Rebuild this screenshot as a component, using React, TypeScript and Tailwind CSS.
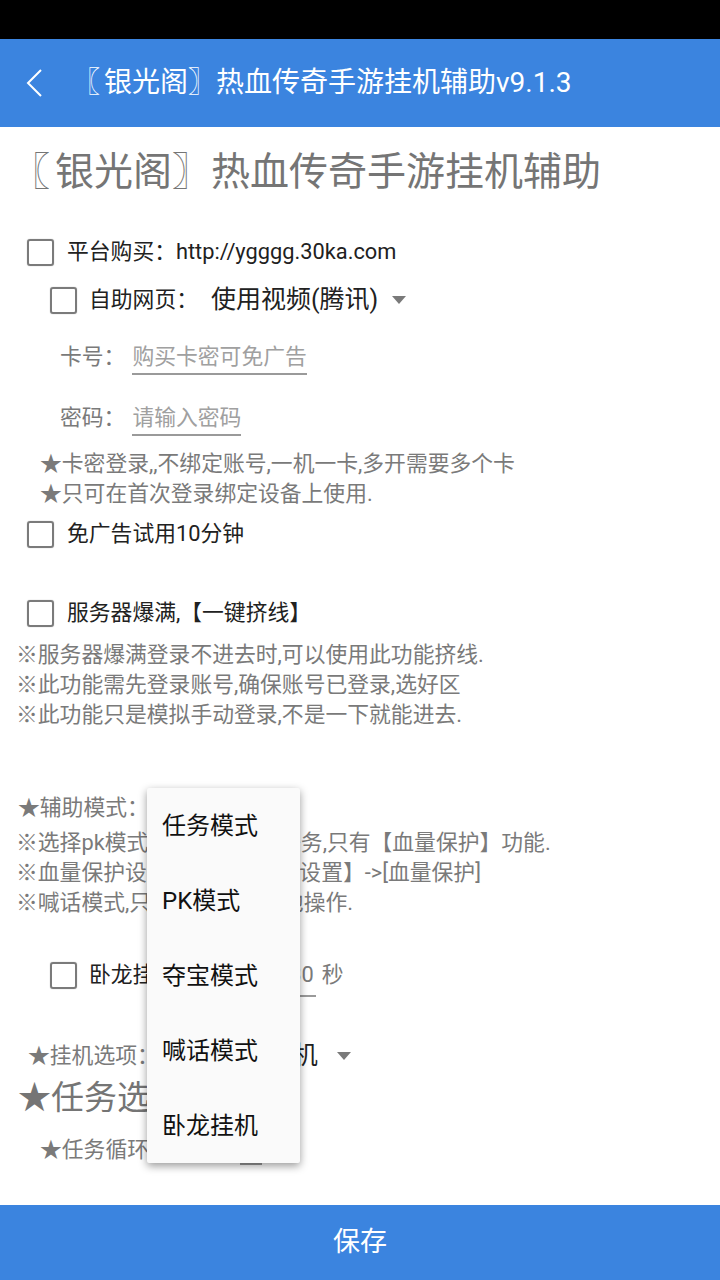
import React from "react";

const Box = ({ mr }: { mr: string }) => (
  <div
    className={`w-[27px] h-[27px] shrink-0 rounded-[3px] border-[2.5px] border-[#7b7b7b] shadow-[0_0_1px_#999] ${mr}`}
  />
);

const Tri = () => (
  <div className="w-0 h-0 border-l-[7px] border-r-[7px] border-t-[8px] border-l-transparent border-r-transparent border-t-[#7a7a7a]" />
);

export default function App() {
  return (
    <div className="relative w-[720px] h-[1280px] flex flex-col overflow-hidden bg-white font-['Roboto','Noto_Sans_CJK_SC',sans-serif]">
      {/* status bar */}
      <div className="h-[39px] shrink-0 bg-black" />
      {/* header */}
      <div className="h-[88px] shrink-0 bg-[#3b84df] flex items-center text-white">
        <svg width="20" height="30" viewBox="0 0 20 30" className="ml-[25px]">
          <polyline points="16,2 3,15 16,28" fill="none" stroke="white" strokeWidth="2" />
        </svg>
        <div className="ml-[31px] text-[28px] leading-none whitespace-nowrap flex items-center">
          <span className="inline-block w-[28px] text-center -translate-x-[4px]">〖</span>
          <span>银光阁</span>
          <span className="inline-block w-[28px] pr-[15px] text-center">〗</span>
          <span>热血传奇手游挂机辅助v9.1.3</span>
        </div>
      </div>

      {/* content */}
      <div className="flex-1 flex flex-col overflow-hidden text-[21.8px]">
        <div className="h-[90px] shrink-0 flex items-center pl-[16px] text-[39px] text-[#757575] whitespace-nowrap">
          <span className="inline-block w-[39px] text-center -translate-x-[5px]">〖</span>
          <span>银光阁</span>
          <span className="inline-block w-[39px] pr-[13px] text-center">〗</span>
          <span>热血传奇手游挂机辅助</span>
        </div>

        <div className="h-[68px] shrink-0 flex items-center pl-[27px] pt-[3px] text-[#212121]">
          <Box mr="mr-[13px]" />
          <span>平台购买：http://ygggg.30ka.com</span>
        </div>

        <div className="h-[30px] shrink-0 flex items-center pl-[50px] text-[#212121]">
          <Box mr="mr-[12px]" />
          <span>自助网页：</span>
          <span className="ml-[13px] text-[25px]">使用视频(腾讯)</span>
          <div className="ml-[14px]">
            <Tri />
          </div>
        </div>

        <div className="h-[15px] shrink-0" />

        <div className="h-[54px] shrink-0 flex items-center pl-[60px]">
          <span className="text-[#7a7a7a] leading-[22px]">卡号：</span>
          <div className="ml-[7px] pt-[7px] flex flex-col">
            <span className="leading-[22px] text-[#a0a0a0]">购买卡密可免广告</span>
            <div className="mt-[5px] h-[2px] bg-[#9a9a9a]" />
          </div>
        </div>

        <div className="h-[7px] shrink-0" />

        <div className="h-[54px] shrink-0 flex items-center pl-[60px]">
          <span className="text-[#7a7a7a] leading-[22px]">密码：</span>
          <div className="ml-[7px] pt-[7px] flex flex-col">
            <span className="leading-[22px] text-[#a0a0a0]">请输入密码</span>
            <div className="mt-[5px] h-[2px] bg-[#9a9a9a]" />
          </div>
        </div>

        <div className="mt-[4px] pl-[40px] text-[#7a7a7a] leading-[30px] shrink-0">
          <div>★卡密登录,,不绑定账号,一机一卡,多开需要多个卡</div>
          <div>★只可在首次登录绑定设备上使用.</div>
        </div>

        <div className="h-[50px] shrink-0 flex items-center pl-[27px] text-[#212121]">
          <Box mr="mr-[13px]" />
          <span>免广告试用10分钟</span>
        </div>

        <div className="h-[29px] shrink-0" />

        <div className="h-[50px] shrink-0 flex items-center pl-[27px] text-[#212121]">
          <Box mr="mr-[13px]" />
          <span>服务器爆满,【一键挤线】</span>
        </div>

        <div className="mt-[2px] pl-[16px] text-[#7a7a7a] leading-[30px] shrink-0">
          <div>※服务器爆满登录不进去时,可以使用此功能挤线.</div>
          <div>※此功能需先登录账号,确保账号已登录,选好区</div>
          <div>※此功能只是模拟手动登录,不是一下就能进去.</div>
        </div>

        <div className="mt-[63px] pl-[18px] text-[#7a7a7a] leading-[30px] shrink-0">★辅助模式：</div>

        <div className="mt-[5px] pl-[16px] text-[#7a7a7a] leading-[30px] shrink-0">
          <div>※选择pk模式将不会做任何任务,只有【血量保护】功能.</div>
          <div>※血量保护设置在【辅助功能设置】-&gt;[血量保护]</div>
          <div>※喊话模式,只喊话不进行其他操作.</div>
        </div>

        <div className="h-[32px] shrink-0" />

        <div className="h-[50px] shrink-0 flex items-center pl-[50px] text-[#212121]">
          <Box mr="mr-[12px]" />
          <span className="leading-[22px]">卧龙挂机间隔时间：</span>
          <div className="ml-[2px] pt-[11px] flex flex-col">
            <span className="leading-[22px] text-[#7a7a7a] px-[2px]">30</span>
            <div className="mt-[9px] h-[2px] bg-[#9a9a9a]" />
          </div>
          <span className="ml-[6px] leading-[22px] text-[#7a7a7a]">秒</span>
        </div>

        <div className="h-[31px] shrink-0" />

        <div className="h-[50px] shrink-0 flex items-center pl-[28px]">
          <span className="text-[#7a7a7a]">★挂机选项：</span>
          <span className="ml-[9px] text-[25px] text-[#212121]">自动打怪挂机</span>
          <div className="ml-[19px]">
            <Tri />
          </div>
        </div>

        <div className="h-[34px] shrink-0 flex items-center pl-[18px] text-[33px] text-[#757575]">
          ★任务选择
        </div>

        <div className="h-[20px] shrink-0" />

        <div className="h-[30px] shrink-0 flex items-center pl-[40px]">
          <span className="text-[#7a7a7a] leading-[22px]">★任务循环次数：</span>
          <div className="ml-[26px] pt-[4px] flex flex-col w-[22px]">
            <span className="leading-[22px] text-[#7a7a7a] text-center">1</span>
            <div className="mt-[2px] h-[2px] bg-[#9a9a9a]" />
          </div>
        </div>
      </div>

      {/* save button */}
      <div className="h-[75px] shrink-0 bg-[#3b84df] flex items-center justify-center text-white text-[27px]">
        保存
      </div>

      {/* dropdown popup */}
      <div className="absolute left-[147px] top-[788px] w-[153px] bg-[#fafafa] rounded-[2px] shadow-[0_3px_9px_rgba(0,0,0,0.4)] flex flex-col text-[24px] text-[#111]">
        {["任务模式", "PK模式", "夺宝模式", "喊话模式", "卧龙挂机"].map((t) => (
          <div key={t} className="h-[75px] flex items-center pl-[15px]">
            {t}
          </div>
        ))}
      </div>
    </div>
  );
}
